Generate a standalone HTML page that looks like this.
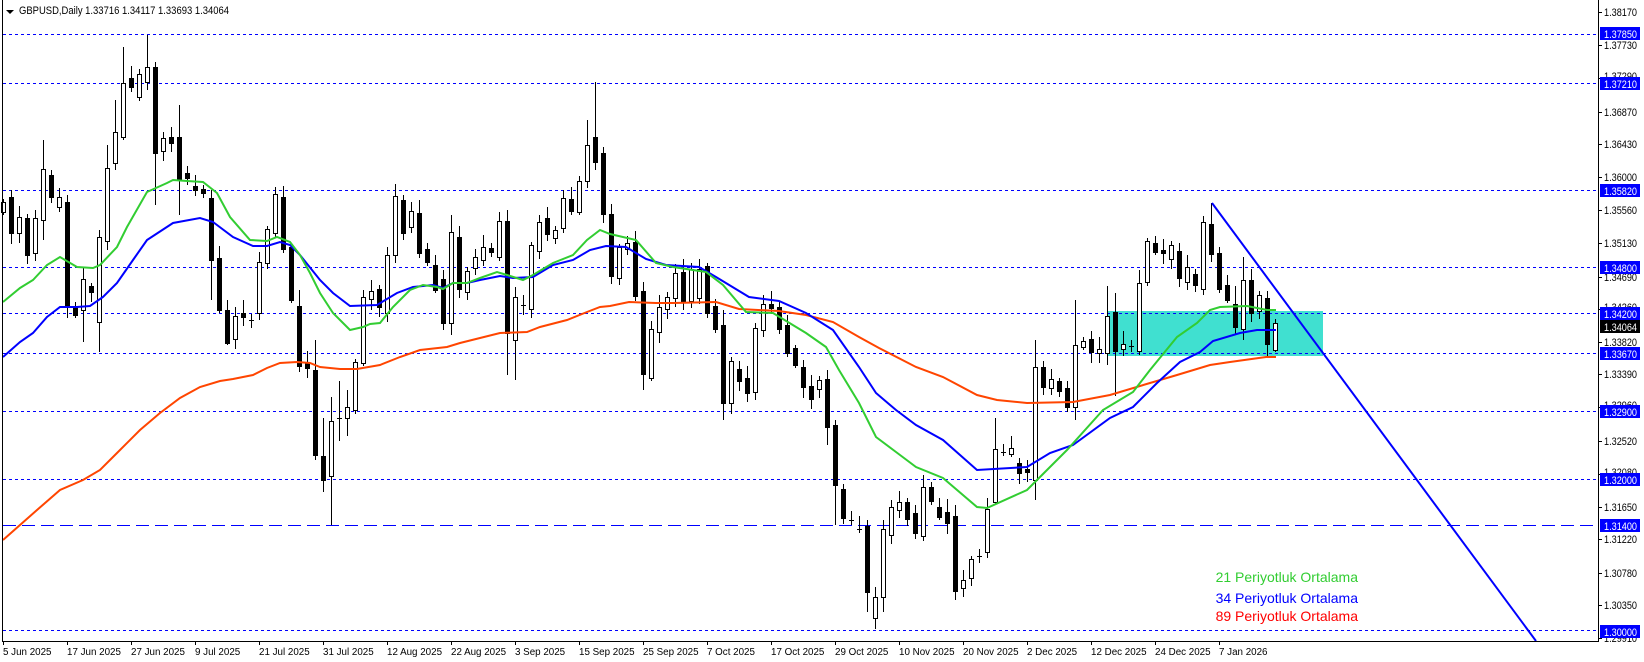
<!DOCTYPE html>
<html><head><meta charset="utf-8">
<style>
html,body{margin:0;padding:0;background:#fff;width:1644px;height:662px;overflow:hidden}
svg{display:block}
text{font-family:"Liberation Sans",Arial,sans-serif}
.ax text{font-size:11px}
</style></head>
<body>
<svg id="s" width="1644" height="662" viewBox="0 0 1644 662" xmlns="http://www.w3.org/2000/svg">
<rect x="0" y="0" width="1644" height="662" fill="#fff"/>
<rect x="1108" y="311" width="215" height="45" fill="#40E0D0"/>
<g stroke="#0000ff" stroke-width="1" stroke-dasharray="3,3" shape-rendering="crispEdges">
<line x1="3" y1="34.5" x2="1598" y2="34.5"/>
<line x1="3" y1="83.5" x2="1598" y2="83.5"/>
<line x1="3" y1="190.5" x2="1598" y2="190.5"/>
<line x1="3" y1="267.5" x2="1598" y2="267.5"/>
<line x1="3" y1="313.5" x2="1598" y2="313.5"/>
<line x1="3" y1="353.5" x2="1598" y2="353.5"/>
<line x1="3" y1="411.5" x2="1598" y2="411.5"/>
<line x1="3" y1="479.5" x2="1598" y2="479.5"/>
<line x1="3" y1="630.5" x2="1598" y2="630.5"/>
</g>
<line x1="3" y1="525.5" x2="1598" y2="525.5" stroke="#0000ff" stroke-width="1" stroke-dasharray="13,6" shape-rendering="crispEdges"/>
<g id="candles" shape-rendering="crispEdges"></g>
<polyline fill="none" stroke="#FF4500" stroke-width="2" points="3,540 20,525 37,510 60,490 83,480 100,470 117,453 140,430 160,413 180,398 200,387 220,381 233,379 253,375 267,368 280,363 297,362 310,363 320,367 340,369 357,369 380,365 400,357 420,350 447,347 460,343 480,338 500,333 527,332 540,327 567,320 587,312 600,307 610,306 629,302 656,303 673,303 716,302 739,309 779,311 806,315 833,322 859,337 879,348 916,367 943,377 977,395 997,400 1027,403 1073,402 1110,395 1150,383 1177,375 1210,365 1230,362 1266,357 1276,357"/>
<polyline fill="none" stroke="#0000ff" stroke-width="2" points="3,357 20,342 33,333 47,317 60,307 77,307 90,306 103,297 117,283 133,260 147,240 173,223 200,218 213,222 233,237 253,246 267,246 280,242 290,245 300,255 320,280 333,293 350,306 377,305 397,293 413,287 433,285 443,288 453,283 467,283 480,280 500,276 513,278 533,277 553,265 573,260 590,250 606,246 626,247 646,259 666,265 699,267 716,277 749,297 779,301 806,313 833,330 859,367 876,393 896,410 916,425 943,440 977,470 1027,467 1050,453 1073,445 1110,418 1133,407 1157,383 1180,362 1200,352 1213,341 1240,333 1257,330 1276,330"/>
<polyline fill="none" stroke="#32CD32" stroke-width="2" points="3,302 20,288 33,280 47,265 60,257 77,267 93,268 100,265 117,247 127,227 147,192 167,183 173,180 187,181 203,182 217,193 230,217 250,240 267,241 277,237 290,242 300,255 310,273 320,293 333,313 350,330 363,327 370,324 380,323 393,307 410,290 423,285 437,287 443,289 453,283 467,283 480,278 497,272 507,275 523,280 533,275 553,263 573,255 587,240 600,230 610,234 636,240 656,263 673,267 706,272 723,285 746,312 773,313 806,333 826,347 839,370 859,403 876,437 896,452 916,467 943,478 977,507 987,508 1027,490 1067,450 1103,410 1133,392 1150,370 1177,337 1197,323 1210,310 1220,307 1247,306 1267,310 1276,310"/>
<line x1="1212" y1="203" x2="1536" y2="641" stroke="#0000ff" stroke-width="2"/>
<g stroke="#000" stroke-width="1" shape-rendering="crispEdges">
<line x1="2.5" y1="0" x2="2.5" y2="641"/>
<line x1="2" y1="641.5" x2="1599" y2="641.5"/>
<line x1="1598.5" y1="0" x2="1598.5" y2="642"/>
</g>
<path d="M6,10 L14,10 L10,14 Z" fill="#000"/>
<text x="19" y="14" font-size="11" fill="#000" textLength="210" lengthAdjust="spacingAndGlyphs">GBPUSD,Daily  1.33716 1.34117 1.33693 1.34064</text>
<g stroke="#000" shape-rendering="crispEdges">
<line x1="1598" y1="12.5" x2="1602" y2="12.5"/><line x1="1598" y1="45.5" x2="1602" y2="45.5"/><line x1="1598" y1="78.5" x2="1602" y2="78.5"/><line x1="1598" y1="112.5" x2="1602" y2="112.5"/><line x1="1598" y1="144.5" x2="1602" y2="144.5"/><line x1="1598" y1="177.5" x2="1602" y2="177.5"/><line x1="1598" y1="210.5" x2="1602" y2="210.5"/><line x1="1598" y1="243.5" x2="1602" y2="243.5"/><line x1="1598" y1="277.5" x2="1602" y2="277.5"/><line x1="1598" y1="309.5" x2="1602" y2="309.5"/><line x1="1598" y1="342.5" x2="1602" y2="342.5"/><line x1="1598" y1="374.5" x2="1602" y2="374.5"/><line x1="1598" y1="407.5" x2="1602" y2="407.5"/><line x1="1598" y1="441.5" x2="1602" y2="441.5"/><line x1="1598" y1="474.5" x2="1602" y2="474.5"/><line x1="1598" y1="507.5" x2="1602" y2="507.5"/><line x1="1598" y1="539.5" x2="1602" y2="539.5"/><line x1="1598" y1="573.5" x2="1602" y2="573.5"/><line x1="1598" y1="605.5" x2="1602" y2="605.5"/><line x1="1598" y1="638.5" x2="1602" y2="638.5"/>
</g>
<g class="ax" fill="#000">
<text x="1604" y="16" textLength="33" lengthAdjust="spacingAndGlyphs">1.38170</text>
<text x="1604" y="49" textLength="33" lengthAdjust="spacingAndGlyphs">1.37730</text>
<text x="1604" y="80" textLength="33" lengthAdjust="spacingAndGlyphs">1.37290</text>
<text x="1604" y="116" textLength="33" lengthAdjust="spacingAndGlyphs">1.36870</text>
<text x="1604" y="148" textLength="33" lengthAdjust="spacingAndGlyphs">1.36430</text>
<text x="1604" y="181" textLength="33" lengthAdjust="spacingAndGlyphs">1.36000</text>
<text x="1604" y="214" textLength="33" lengthAdjust="spacingAndGlyphs">1.35560</text>
<text x="1604" y="247" textLength="33" lengthAdjust="spacingAndGlyphs">1.35130</text>
<text x="1604" y="281" textLength="33" lengthAdjust="spacingAndGlyphs">1.34690</text>
<text x="1604" y="311" textLength="33" lengthAdjust="spacingAndGlyphs">1.34260</text>
<text x="1604" y="346" textLength="33" lengthAdjust="spacingAndGlyphs">1.33820</text>
<text x="1604" y="378" textLength="33" lengthAdjust="spacingAndGlyphs">1.33390</text>
<text x="1604" y="409" textLength="33" lengthAdjust="spacingAndGlyphs">1.32960</text>
<text x="1604" y="445" textLength="33" lengthAdjust="spacingAndGlyphs">1.32520</text>
<text x="1604" y="476" textLength="33" lengthAdjust="spacingAndGlyphs">1.32080</text>
<text x="1604" y="511" textLength="33" lengthAdjust="spacingAndGlyphs">1.31650</text>
<text x="1604" y="543" textLength="33" lengthAdjust="spacingAndGlyphs">1.31220</text>
<text x="1604" y="577" textLength="33" lengthAdjust="spacingAndGlyphs">1.30780</text>
<text x="1604" y="609" textLength="33" lengthAdjust="spacingAndGlyphs">1.30350</text>
<text x="1604" y="642" textLength="33" lengthAdjust="spacingAndGlyphs">1.29910</text>
</g>
<g class="ax">
<rect x="1600" y="27" width="40" height="13" fill="#0000ff"/><text x="1604" y="38" fill="#fff" textLength="33" lengthAdjust="spacingAndGlyphs">1.37850</text>
<rect x="1600" y="77" width="40" height="13" fill="#0000ff"/><text x="1604" y="88" fill="#fff" textLength="33" lengthAdjust="spacingAndGlyphs">1.37210</text>
<rect x="1600" y="184" width="40" height="13" fill="#0000ff"/><text x="1604" y="195" fill="#fff" textLength="33" lengthAdjust="spacingAndGlyphs">1.35820</text>
<rect x="1600" y="261" width="40" height="13" fill="#0000ff"/><text x="1604" y="272" fill="#fff" textLength="33" lengthAdjust="spacingAndGlyphs">1.34800</text>
<rect x="1600" y="307" width="40" height="13" fill="#0000ff"/><text x="1604" y="318" fill="#fff" textLength="33" lengthAdjust="spacingAndGlyphs">1.34200</text>
<rect x="1600" y="320" width="40" height="13" fill="#000"/><text x="1604" y="331" fill="#fff" textLength="33" lengthAdjust="spacingAndGlyphs">1.34064</text>
<rect x="1600" y="347" width="40" height="13" fill="#0000ff"/><text x="1604" y="358" fill="#fff" textLength="33" lengthAdjust="spacingAndGlyphs">1.33670</text>
<rect x="1600" y="405" width="40" height="13" fill="#0000ff"/><text x="1604" y="416" fill="#fff" textLength="33" lengthAdjust="spacingAndGlyphs">1.32900</text>
<rect x="1600" y="473" width="40" height="13" fill="#0000ff"/><text x="1604" y="484" fill="#fff" textLength="33" lengthAdjust="spacingAndGlyphs">1.32000</text>
<rect x="1600" y="519" width="40" height="13" fill="#0000ff"/><text x="1604" y="530" fill="#fff" textLength="33" lengthAdjust="spacingAndGlyphs">1.31400</text>
<rect x="1600" y="625" width="40" height="13" fill="#0000ff"/><text x="1604" y="636" fill="#fff" textLength="33" lengthAdjust="spacingAndGlyphs">1.30000</text>
</g>
<g stroke="#000" shape-rendering="crispEdges" id="bt"></g>
<g font-size="9.8" fill="#000">
<text x="3" y="655">5 Jun 2025</text>
<text x="67" y="655">17 Jun 2025</text>
<text x="131" y="655">27 Jun 2025</text>
<text x="195" y="655">9 Jul 2025</text>
<text x="259" y="655">21 Jul 2025</text>
<text x="323" y="655">31 Jul 2025</text>
<text x="387" y="655">12 Aug 2025</text>
<text x="451" y="655">22 Aug 2025</text>
<text x="515" y="655">3 Sep 2025</text>
<text x="579" y="655">15 Sep 2025</text>
<text x="643" y="655">25 Sep 2025</text>
<text x="707" y="655">7 Oct 2025</text>
<text x="771" y="655">17 Oct 2025</text>
<text x="835" y="655">29 Oct 2025</text>
<text x="899" y="655">10 Nov 2025</text>
<text x="963" y="655">20 Nov 2025</text>
<text x="1027" y="655">2 Dec 2025</text>
<text x="1091" y="655">12 Dec 2025</text>
<text x="1155" y="655">24 Dec 2025</text>
<text x="1219" y="655">7 Jan 2026</text>
</g>
<g font-size="14" text-anchor="end">
<text x="1358" y="582" fill="#32CD32">21 Periyotluk Ortalama</text>
<text x="1358" y="603" fill="#0000ff">34 Periyotluk Ortalama</text>
<text x="1358" y="621" fill="#ff0000">89 Periyotluk Ortalama</text>
</g>
</svg>
<script>
var C=[[202,212,'w'],[197,233,'b'],[217,233,'w'],[218,255,'b'],[218,253,'w'],[169,220,'w'],[175,197,'b'],[197,207,'w'],[202,307,'b'],[308,315,'b'],
[279,310,'w'],[286,292,'b'],[237,322,'w'],[168,241,'w'],[132,163,'w'],[83,137,'w'],[78,87,'b'],[74,97,'w'],[67,82,'w'],[67,153,'b'],
[138,151,'w'],[137,143,'b'],[137,179,'b'],[173,178,'b'],[186,190,'b'],[189,193,'b'],[198,260,'b'],[258,310,'b'],[310,343,'b'],[316,339,'w'],
[313,317,'b'],[320,320,'d'],[262,313,'w'],[229,263,'w'],[194,233,'w'],[197,249,'b'],[247,300,'b'],[306,366,'b'],[363,368,'b'],[370,455,'b'],
[456,480,'b'],[421,476,'w'],[418,418,'d'],[407,418,'w'],[362,410,'w'],[297,363,'w'],[291,299,'w'],[289,307,'b'],[255,313,'w'],[196,255,'w'],
[200,233,'b'],[211,227,'w'],[213,253,'b'],[249,262,'b'],[265,290,'b'],[279,323,'b'],[232,323,'w'],[237,289,'b'],[271,292,'w'],[257,268,'w'],
[247,260,'w'],[248,252,'b'],[221,257,'w'],[221,333,'b'],[297,340,'w'],[305,305,'d'],[245,309,'w'],[222,251,'w'],[218,234,'b'],[230,238,'w'],
[198,228,'w'],[199,211,'b'],[181,212,'w'],[145,181,'w'],[137,162,'b'],[153,214,'b'],[214,276,'b'],[247,278,'w'],[243,249,'w'],[242,296,'b'],
[291,374,'b'],[329,378,'w'],[307,332,'w'],[297,309,'w'],[273,298,'w'],[272,302,'b'],[269,301,'w'],[269,298,'w'],[266,313,'b'],[306,329,'b'],
[325,403,'b'],[361,403,'w'],[369,381,'b'],[378,393,'b'],[328,392,'w'],[304,330,'w'],[304,308,'b'],[307,329,'b'],[325,353,'b'],[348,365,'b'],
[367,387,'b'],[386,399,'b'],[380,389,'w'],[379,427,'b'],[425,485,'b'],[489,518,'b'],[520,520,'d'],[529,529,'d'],[526,592,'b'],[597,618,'w'],
[529,597,'w'],[507,535,'w'],[502,510,'w'],[502,519,'b'],[513,533,'b'],[487,536,'w'],[487,501,'b'],[507,517,'b'],[512,523,'b'],[516,591,'b'],
[580,588,'w'],[559,578,'w'],[556,556,'d'],[509,552,'w'],[449,502,'w'],[452,452,'d'],[448,454,'w'],[463,473,'b'],[469,472,'b'],[367,480,'w'],
[367,387,'b'],[379,388,'w'],[381,391,'b'],[388,407,'b'],[345,407,'w'],[341,347,'w'],[339,352,'b'],[349,353,'w'],[316,353,'w'],[312,351,'b'],
[344,349,'w'],[346,346,'d'],[283,351,'w'],[241,282,'w'],[243,252,'b'],[250,253,'b'],[245,259,'w'],[251,278,'b'],[267,282,'w'],[274,285,'b'],
[222,289,'w'],[224,254,'b'],[253,289,'b'],[285,300,'b'],[304,327,'b'],[280,329,'w'],[280,313,'b'],[295,311,'w'],[298,344,'b'],[323,350,'w']];
var W={18:[35,90],15:[47,140],14:[100,170],13:[145,250],39:[340,460],41:[397,525],40:[418,492],42:[381,441],43:[390,436],63:[210,375],64:[287,380],74:[82,170],73:[120,188],104:[420,525],108:[520,612],129:[340,500],151:[203,262],150:[216,295],28:[300,345],8:[195,318],12:[230,352],10:[268,342],19:[62,205],37:[290,372],80:[282,390],90:[310,420],103:[370,445],110:[520,612],119:[505,600],124:[418,505],134:[300,420],138:[286,365],139:[293,396],142:[270,355],155:[257,340],154:[286,335],158:[291,356],159:[319,352],5:[140,240],22:[105,215],26:[190,300],55:[270,330],56:[215,335]};
var g=document.getElementById('candles'),h='';
for(var i=0;i<C.length;i++){var c=C[i],x=3+8*i,t=c[0],b=c[1];
var r=(i*37)%11, wt=W[i]?W[i][0]:t-3-r, wb=W[i]?W[i][1]:b+3+((i*53)%9);
h+='<line x1="'+(x+0.5)+'" y1="'+wt+'" x2="'+(x+0.5)+'" y2="'+wb+'" stroke="#000" stroke-width="1"/>';
if(c[2]=='d'){h+='<line x1="'+(x-2)+'" y1="'+(t+0.5)+'" x2="'+(x+3)+'" y2="'+(t+0.5)+'" stroke="#000"/>';}
else if(c[2]=='w'){h+='<rect x="'+(x-1.5)+'" y="'+(t+0.5)+'" width="4" height="'+Math.max(1,b-t)+'" fill="#fff" stroke="#000" stroke-width="1"/>';}
else{h+='<rect x="'+(x-2)+'" y="'+t+'" width="5" height="'+Math.max(1,b-t+1)+'" fill="#000"/>';}}
g.innerHTML=h;
var bt='';for(var k=0;k<20;k++){var xx=3+64*k+0.5;bt+='<line x1="'+xx+'" y1="641" x2="'+xx+'" y2="645"/>';}
document.getElementById('bt').innerHTML=bt;
</script>
</body></html>
